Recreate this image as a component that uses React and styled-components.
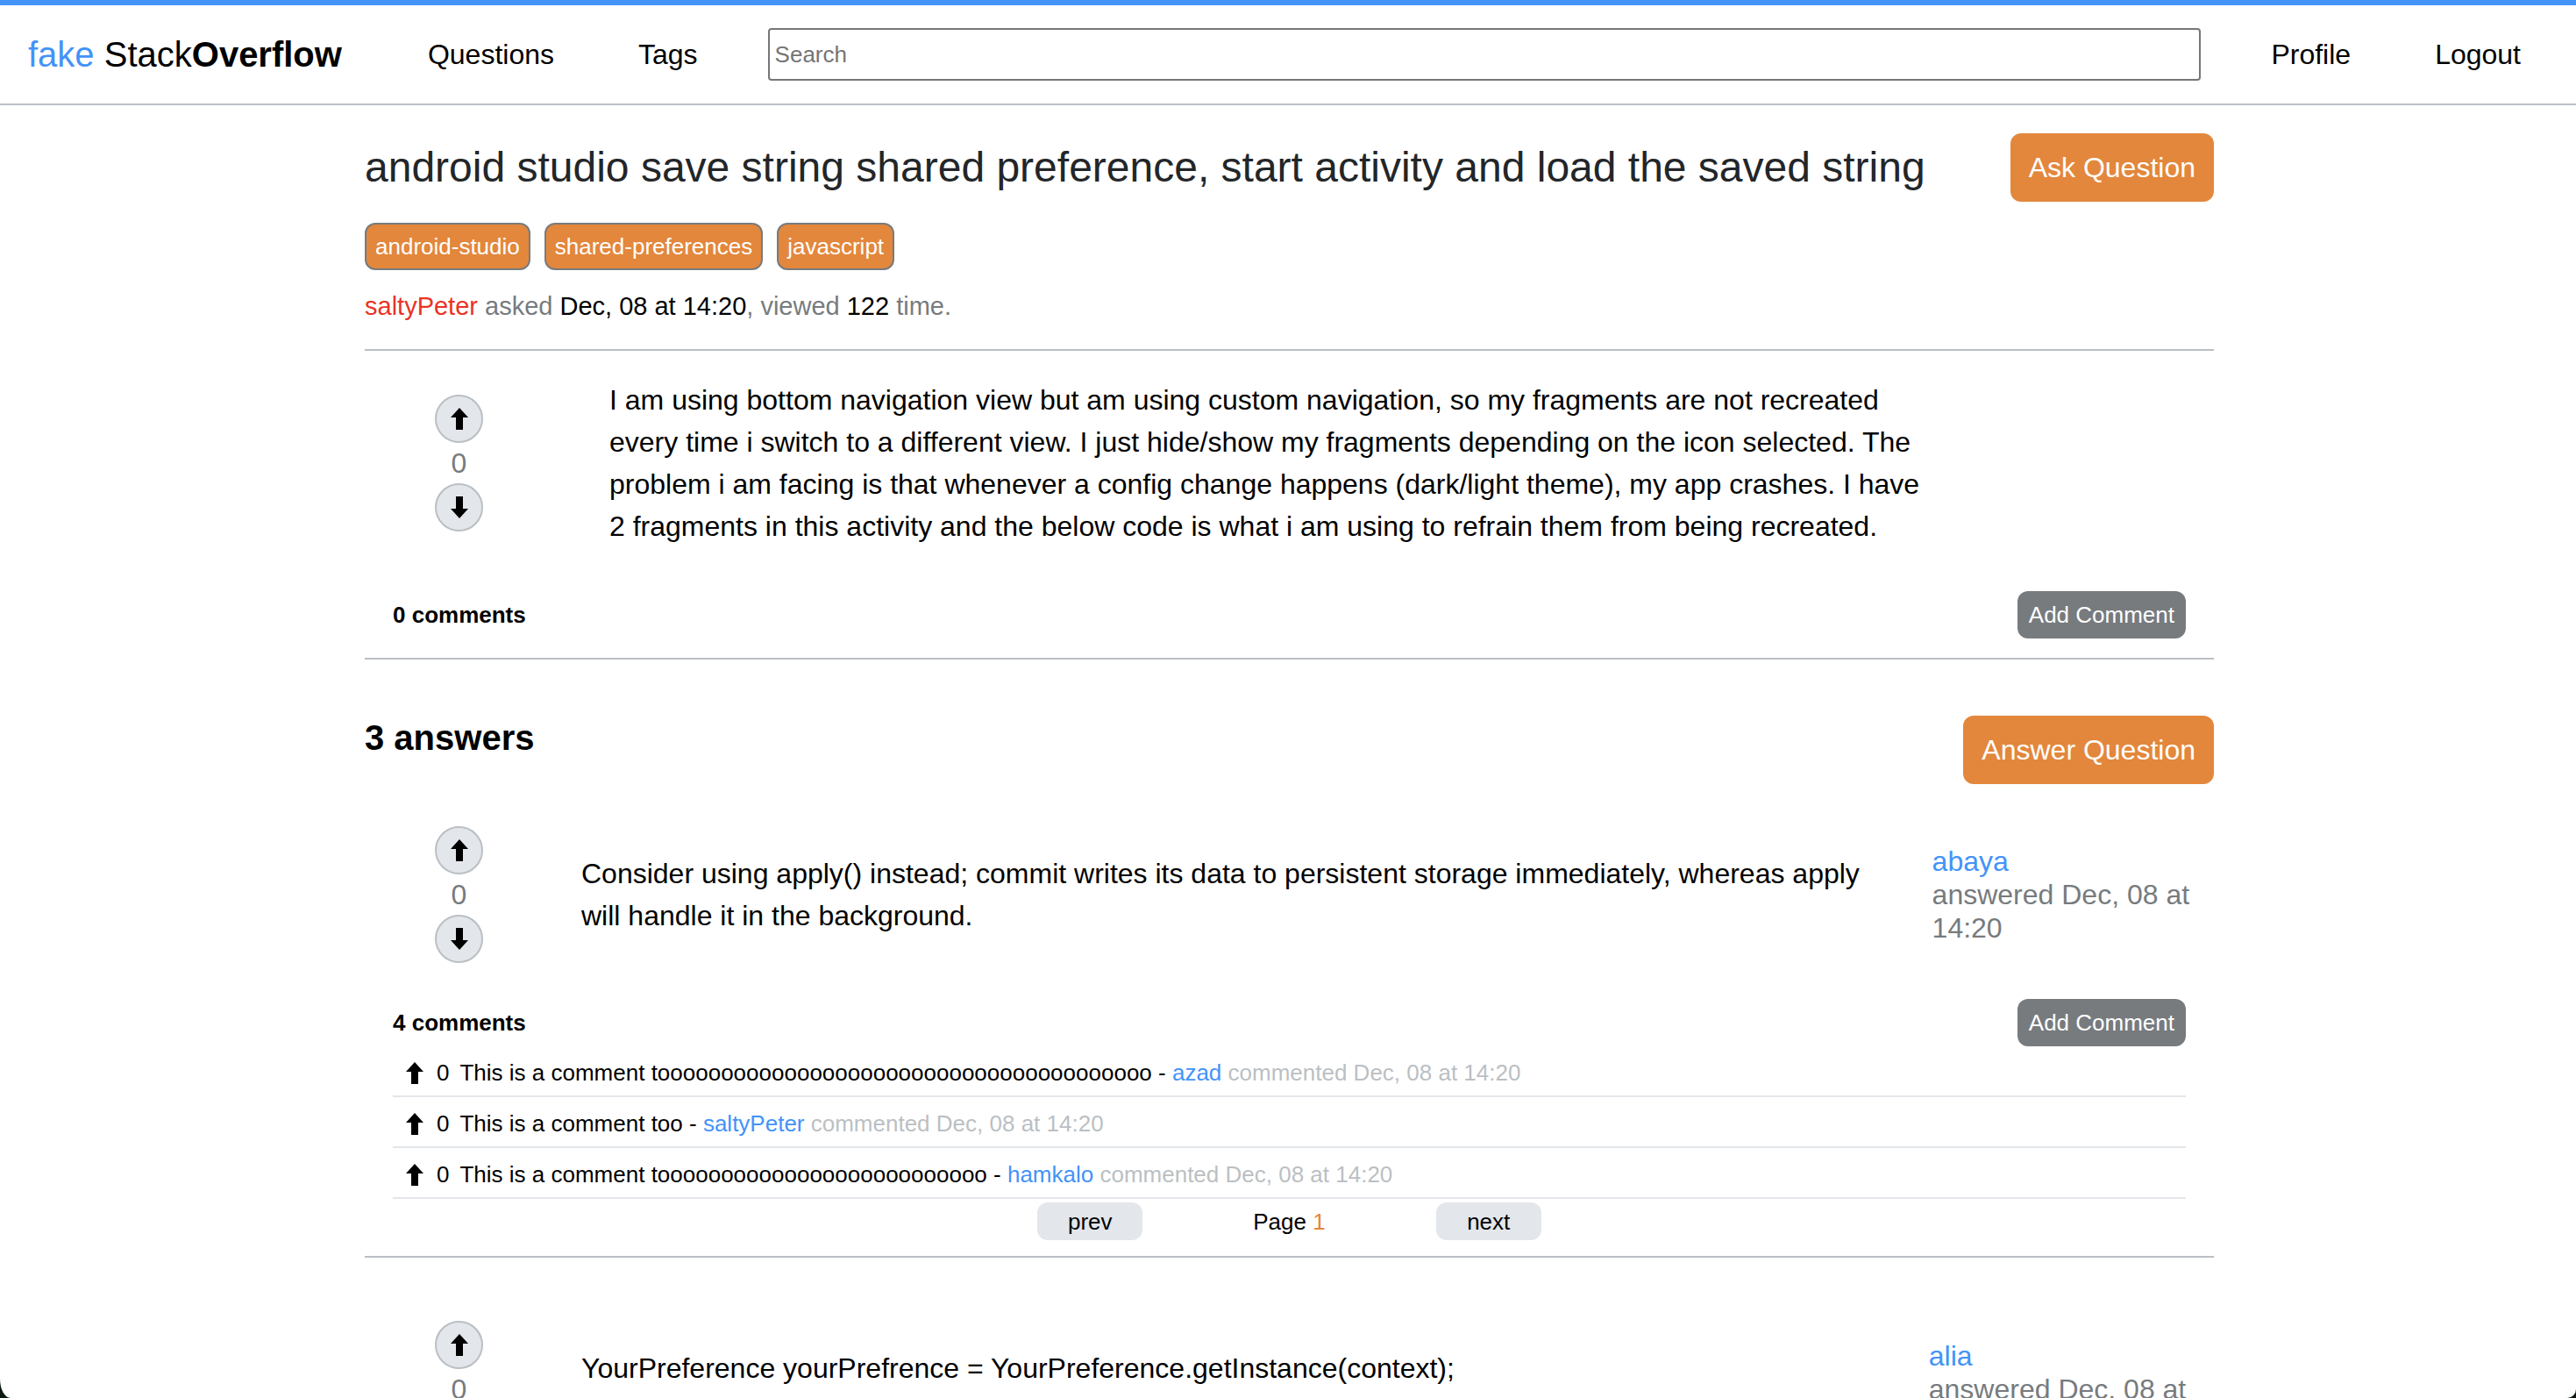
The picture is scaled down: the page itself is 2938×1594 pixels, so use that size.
import React from "react";
import styled, { createGlobalStyle } from "styled-components";

const color = {
  blue: "#4393f8",
  orange: "#e3873c",
  red: "#ea3325",
  gray: "#777b7e",
  line: "#babfc4",
  soft: "#e3e6eb",
  muted: "#bbbfc3",
  title: "#232629",
};

const GlobalStyle = createGlobalStyle`
  * { box-sizing: border-box; }
  body {
    margin: 0;
    background: #0b1a0d;
    color: #000;
    font-family: "Liberation Sans", Arial, Helvetica, sans-serif;
    font-size: 32px;
    line-height: 38px;
  }
  a { color: inherit; text-decoration: none; }
  button { border: 0; font: inherit; cursor: pointer; }
  h1, h2, h3, p, ul { margin: 0; padding: 0; }
  ul { list-style: none; }
`;

const Page = styled.div`
  height: 100vh;
  overflow: hidden;
  background: #fff;
  border-bottom-left-radius: 12px 22px;
  border-bottom-right-radius: 10px;
`;

const Header = styled.header`
  display: flex;
  align-items: center;
  height: 120px;
  padding: 0 63px 0 32px;
  border-top: 6px solid ${color.blue};
  border-bottom: 2px solid ${color.line};
`;

const Logo = styled.a`
  margin-right: 98px;
  font-size: 40px;
  line-height: 46px;
  white-space: nowrap;
`;

const LogoAccent = styled.span`
  color: ${color.blue};
`;

const Nav = styled.nav`
  display: flex;
  gap: 96px;
`;

const SearchInput = styled.input`
  flex: 1;
  min-width: 0;
  height: 60px;
  margin: 0 80px;
  padding: 0 6px;
  border: 2px solid #767676;
  border-radius: 4px;
  background: #fff;
  font-family: inherit;
  font-size: 26px;
  &::placeholder { color: #757575; opacity: 1; }
`;

const Main = styled.main`
  padding: 32px 413px 0 416px;
`;

const SplitRow = styled.div`
  display: flex;
  justify-content: space-between;
  align-items: ${(p) => p.$align || "center"};
`;

const Title = styled.h1`
  color: ${color.title};
  font-size: 48px;
  font-weight: 400;
  line-height: 56px;
`;

const PrimaryButton = styled.button`
  flex: none;
  padding: 20px 21px;
  border-radius: 12px;
  background: ${color.orange};
  color: #fff;
`;

const Tags = styled.div`
  display: flex;
  gap: 16px;
  margin-top: 24px;
`;

const Tag = styled.button`
  padding: 10px;
  border: 2px solid ${color.gray};
  border-radius: 12px;
  background: ${color.orange};
  color: #fff;
  font-size: 26px;
  line-height: 30px;
`;

const Meta = styled.p`
  margin-top: 24px;
  padding-bottom: 32px;
  border-bottom: 2px solid ${color.line};
  color: ${color.gray};
  font-size: 29px;
  line-height: 34px;
`;

const Strong = styled.span`
  color: ${(p) => p.$color || "#000"};
`;

const Post = styled.article`
  border-bottom: 2px solid ${color.line};
`;

const QuestionBody = styled.div`
  display: flex;
  align-items: center;
  padding: 32px 320px 33px 0;
`;

const AnswerBody = styled.div`
  display: flex;
  align-items: center;
  padding: 24px 0;
`;

const Votes = styled.div`
  display: flex;
  flex: none;
  flex-direction: column;
  align-items: center;
  gap: 4px;
  width: 215px;
  color: ${color.gray};
`;

const RoundButton = styled.button`
  display: flex;
  align-items: center;
  justify-content: center;
  width: 55px;
  height: 55px;
  padding: 0;
  border: 2px solid ${color.line};
  border-radius: 50%;
  background: ${color.soft};
  color: #000;
`;

const PlainButton = styled.button`
  display: flex;
  padding: 0;
  margin-right: 15px;
  background: none;
  color: #000;
`;

const PostText = styled.p`
  flex: 1 1 auto;
  padding-left: ${(p) => p.$inset}px;
  line-height: 48px;
`;

const Author = styled.div`
  flex: 0 0.22 338px;
  margin-left: 54px;
  color: ${color.gray};
`;

const UserLink = styled.a`
  display: ${(p) => (p.$block ? "block" : "inline")};
  color: ${color.blue};
`;

const Comments = styled.section`
  padding: 17px 32px 18px;
  font-size: 26px;
  line-height: 30px;
`;

const CommentsTitle = styled.h3`
  font-size: 26px;
  font-weight: 700;
`;

const CommentButton = styled.button`
  padding: 12px 13px;
  border-radius: 12px;
  background: ${color.gray};
  color: #fff;
`;

const CommentList = styled.ul`
  margin-bottom: 4px;
`;

const CommentRow = styled.li`
  display: flex;
  align-items: center;
  height: 58px;
  padding: 4px 0 0 15px;
  border-bottom: 2px solid ${color.soft};
`;

const CommentScore = styled.span`
  margin-right: 12px;
`;

const Faded = styled.span`
  color: ${color.muted};
`;

const Pager = styled.div`
  display: flex;
  align-items: center;
  justify-content: center;
  gap: 126px;
`;

const PagerButton = styled.button`
  width: 120px;
  height: 43px;
  padding: 0;
  border-radius: 12px;
  background: ${color.soft};
  color: #000;
`;

const AnswersHead = styled(SplitRow)`
  margin: 64px 0 24px;
`;

const AnswersTitle = styled.h2`
  font-size: 40px;
  line-height: 50px;
`;

const Answers = styled.div`
  display: flex;
  flex-direction: column;
  gap: 48px;
`;

function Arrow({ down }) {
  const points = down
    ? "10,25 20,14 14,14 14,0 6,0 6,14 0,14"
    : "10,0 20,11 14,11 14,25 6,25 6,11 0,11";
  return (
    <svg width="20" height="25" viewBox="0 0 20 25" aria-hidden="true">
      <polygon points={points} fill="currentColor" />
    </svg>
  );
}

function VoteBox({ count }) {
  return (
    <Votes>
      <RoundButton aria-label="Upvote"><Arrow /></RoundButton>
      <span>{count}</span>
      <RoundButton aria-label="Downvote"><Arrow down /></RoundButton>
    </Votes>
  );
}

function CommentSection({ total, comments }) {
  return (
    <Comments>
      <SplitRow>
        <CommentsTitle>{total} comments</CommentsTitle>
        <CommentButton>Add Comment</CommentButton>
      </SplitRow>
      <CommentList>
        {comments.map((c) => (
          <CommentRow key={c.user}>
            <PlainButton aria-label="Upvote comment"><Arrow /></PlainButton>
            <CommentScore>0</CommentScore>
            <span>
              {c.text} - <UserLink href="#">{c.user}</UserLink>{" "}
              <Faded>commented Dec, 08 at 14:20</Faded>
            </span>
          </CommentRow>
        ))}
      </CommentList>
      {comments.length > 0 && (
        <Pager>
          <PagerButton>prev</PagerButton>
          <span>Page <Strong $color={color.orange}>1</Strong></span>
          <PagerButton>next</PagerButton>
        </Pager>
      )}
    </Comments>
  );
}

const tags = ["android-studio", "shared-preferences", "javascript"];

const answers = [
  {
    user: "abaya",
    text: "Consider using apply() instead; commit writes its data to persistent storage immediately, whereas apply will handle it in the background.",
    total: 4,
    comments: [
      { user: "azad", text: "This is a comment t" + "o".repeat(39) },
      { user: "saltyPeter", text: "This is a comment too" },
      { user: "hamkalo", text: "This is a comment t" + "o".repeat(26) },
    ],
  },
  {
    user: "alia",
    text: "YourPreference yourPrefrence = YourPreference.getInstance(context); yourPreference.saveData(YOUR_KEY,YOUR_VALUE);",
    total: 0,
    comments: [],
  },
];

export default function App() {
  return (
    <Page>
      <GlobalStyle />
      <Header>
        <Logo href="#"><LogoAccent>fake</LogoAccent> Stack<b>Overflow</b></Logo>
        <Nav>
          <a href="#">Questions</a>
          <a href="#">Tags</a>
        </Nav>
        <SearchInput type="text" placeholder="Search" aria-label="Search" />
        <Nav>
          <a href="#">Profile</a>
          <a href="#">Logout</a>
        </Nav>
      </Header>
      <Main>
        <SplitRow>
          <Title>android studio save string shared preference, start activity and load the saved string</Title>
          <PrimaryButton>Ask Question</PrimaryButton>
        </SplitRow>
        <Tags>
          {tags.map((t) => <Tag key={t}>{t}</Tag>)}
        </Tags>
        <Meta>
          <Strong $color={color.red}>saltyPeter</Strong> asked <Strong>Dec, 08 at 14:20</Strong>, viewed <Strong>122</Strong> time.
        </Meta>
        <Post>
          <QuestionBody>
            <VoteBox count={0} />
            <PostText $inset={64}>
              I am using bottom navigation view but am using custom navigation, so my fragments are not recreated every time i switch to a different view. I just hide/show my fragments depending on the icon selected. The problem i am facing is that whenever a config change happens (dark/light theme), my app crashes. I have 2 fragments in this activity and the below code is what i am using to refrain them from being recreated.
            </PostText>
          </QuestionBody>
          <CommentSection total={0} comments={[]} />
        </Post>
        <AnswersHead $align="flex-start">
          <AnswersTitle>3 answers</AnswersTitle>
          <PrimaryButton>Answer Question</PrimaryButton>
        </AnswersHead>
        <Answers>
          {answers.map((a) => (
            <Post key={a.user}>
              <AnswerBody>
                <VoteBox count={0} />
                <PostText $inset={32}>{a.text}</PostText>
                <Author>
                  <UserLink href="#" $block>{a.user}</UserLink>
                  answered Dec, 08 at 14:20
                </Author>
              </AnswerBody>
              <CommentSection total={a.total} comments={a.comments} />
            </Post>
          ))}
        </Answers>
      </Main>
    </Page>
  );
}
